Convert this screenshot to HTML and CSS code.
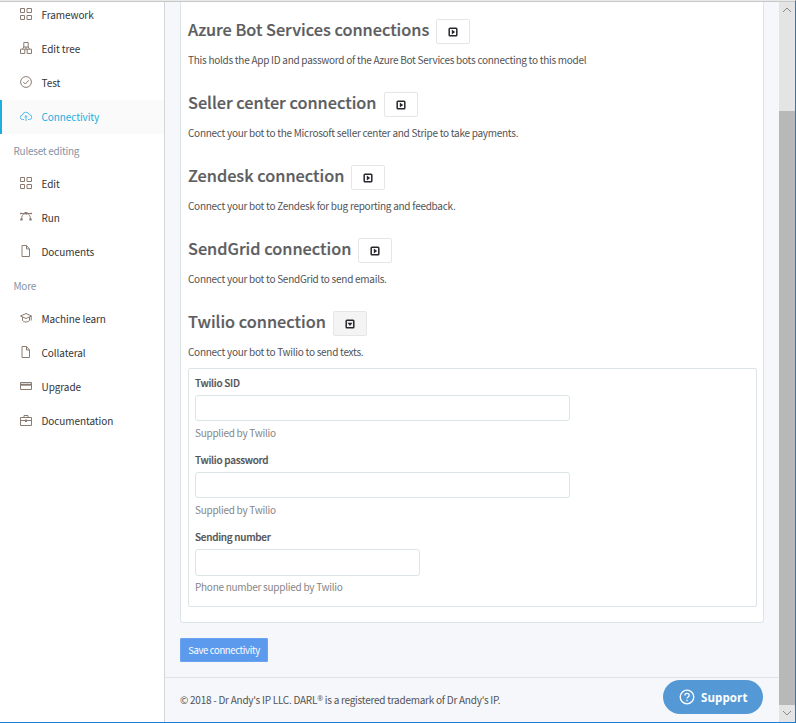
FILE: index.html
```html
<!DOCTYPE html>
<html lang="en">
<head>
<meta charset="utf-8">
<title>Connectivity</title>
<link rel="stylesheet" href="styles.css">
</head>
<body>
<svg class="defs" aria-hidden="true">
  <symbol id="grid" viewBox="0 0 12 12"><path d="M.5.5h4v4h-4zM7 .5h4.500v4H7zM.5 7.500h4v4h-4zM7 7.500h4.500v4H7z"/></symbol>
  <symbol id="tree" viewBox="0 0 12 12"><path d="M3.800.5h4.400v4.500H3.800zM.5 7.200h4.300v4.300H.5zM7.200 7.200h4.300v4.300H7.200zM6 5v2.200M2.600 7l1.200-2M9.400 7L8.200 5M4.800 7.200h2.400"/></symbol>
  <symbol id="check" viewBox="0 0 12 12"><circle cx="6" cy="6" r="5.400"/><path d="M3.300 6l2 2 3.600-3.800"/></symbol>
  <symbol id="cloud" viewBox="0 0 12 12"><path d="M4 9.500H2.700a2.200 2.200 0 0 1-.4-4.400A3.700 3.700 0 0 1 9.400 4.700a2.400 2.400 0 0 1 0 4.800H8M6 11V5.600M4.400 7.200L6 5.600l1.600 1.600"/></symbol>
  <symbol id="vector" viewBox="0 0 12 12"><path d="M0 2.500h12M1.500 8.500c0-3 1-5.200 3.200-6M10.500 8.500c0-3-1-5.200-3.200-6"/><path class="solid" d="M4.500 1h3v2.500h-3zM.3 7.500h2.400v2H.3zM9.300 7.500h2.400v2H9.300zM0 1.800h1.500v1.500H0zM10.500 1.800H12v1.500h-1.500z"/></symbol>
  <symbol id="file" viewBox="0 0 12 12"><path d="M2 .5h4.500L9.500 4v7.500H2zM6.500.5V4h3"/></symbol>
  <symbol id="cap" viewBox="0 0 12 12"><path d="M.5 4L6 1.500 11.500 4 6 6.500zM2.500 5v3.500c2 2 5 2 7 0V5M11.200 4v4.500"/></symbol>
  <symbol id="cardicon" viewBox="0 0 12 12"><path d="M.5 2.500h11v7H.5z"/><path class="solid" d="M.5 3.700h11v2H.5z"/></symbol>
  <symbol id="case" viewBox="0 0 12 12"><path d="M.5 3.500h11v8H.5zM4 3.500v-2h4v2M.5 6.500h11M6 5v3M5 7.500h2"/></symbol>
  <symbol id="right" viewBox="0 0 10 10"><rect x="1.200" y="1.200" width="7.600" height="7.600" rx=".8" stroke-width="1.500"/><path class="solid" d="M3.800 2.600L7.200 5 3.800 7.400z"/></symbol>
  <symbol id="down" viewBox="0 0 10 10"><rect x="1.200" y="1.200" width="7.600" height="7.600" rx=".8" stroke-width="1.500"/><path class="solid" d="M2.500 3.700h5L5 7.100z"/></symbol>
</svg>
<div class="window">
  <nav class="sidebar">
    <a class="item"><svg><use href="#grid"/></svg><span>Framework</span></a>
    <a class="item"><svg><use href="#tree"/></svg><span>Edit tree</span></a>
    <a class="item"><svg><use href="#check"/></svg><span>Test</span></a>
    <a class="item active"><svg><use href="#cloud"/></svg><span>Connectivity</span></a>
    <div class="group">Ruleset editing</div>
    <a class="item"><svg><use href="#grid"/></svg><span>Edit</span></a>
    <a class="item"><svg><use href="#vector"/></svg><span>Run</span></a>
    <a class="item"><svg><use href="#file"/></svg><span>Documents</span></a>
    <div class="group">More</div>
    <a class="item"><svg><use href="#cap"/></svg><span>Machine learn</span></a>
    <a class="item"><svg><use href="#file"/></svg><span>Collateral</span></a>
    <a class="item"><svg><use href="#cardicon"/></svg><span>Upgrade</span></a>
    <a class="item"><svg><use href="#case"/></svg><span>Documentation</span></a>
  </nav>
  <main class="main">
    <div class="panel">
      <section class="section">
        <div class="head"><h2>Azure Bot Services connections</h2><button class="toggle"><svg><use href="#right"/></svg></button></div>
        <p>This holds the App ID and password of the Azure Bot Services bots connecting to this model</p>
      </section>
      <section class="section">
        <div class="head"><h2>Seller center connection</h2><button class="toggle"><svg><use href="#right"/></svg></button></div>
        <p>Connect your bot to the Microsoft seller center and Stripe to take payments.</p>
      </section>
      <section class="section">
        <div class="head"><h2>Zendesk connection</h2><button class="toggle"><svg><use href="#right"/></svg></button></div>
        <p>Connect your bot to Zendesk for bug reporting and feedback.</p>
      </section>
      <section class="section">
        <div class="head"><h2>SendGrid connection</h2><button class="toggle"><svg><use href="#right"/></svg></button></div>
        <p>Connect your bot to SendGrid to send emails.</p>
      </section>
      <section class="section">
        <div class="head"><h2>Twilio connection</h2><button class="toggle open"><svg><use href="#down"/></svg></button></div>
        <p>Connect your bot to Twilio to send texts.</p>
      </section>
      <div class="fields">
        <div class="field"><label for="sid">Twilio SID</label><input id="sid"><small>Supplied by Twilio</small></div>
        <div class="field"><label for="pw">Twilio password</label><input id="pw"><small>Supplied by Twilio</small></div>
        <div class="field"><label for="num">Sending number</label><input id="num" class="short"><small>Phone number supplied by Twilio</small></div>
      </div>
    </div>
    <button class="save">Save connectivity</button>
    <footer class="footer"><span>© 2018 - Dr Andy's IP LLC. DARL<sup>®</sup> is a registered trademark of Dr Andy's IP.</span></footer>
  </main>
  <div class="scrollbar">
    <svg class="arrow" viewBox="0 0 16 16"><path d="M4 10l4-4 4 4"/></svg>
    <div class="thumb"></div>
    <svg class="arrow" viewBox="0 0 16 16"><path d="M4 6l4 4 4-4"/></svg>
  </div>
</div>
<button class="support"><svg viewBox="0 0 16 16"><circle cx="8" cy="8" r="6.800"/><path d="M5.900 6.500c0-2.900 4.300-2.700 4.300-.2C10.200 8 8 7.900 8 9.600M8 10.800v1.500"/></svg><span>Support</span></button>
</body>
</html>
```
FILE: styles.css
```css
* { box-sizing: border-box; }
body {
  margin: 0;
  height: 723px;
  overflow: hidden;
  font: 10px/16px "Noto Sans CJK SC", "Noto Sans", sans-serif;
  letter-spacing: -.27px;
  color: #525356;
  background: #f5f7fb;
}
.defs { position: absolute; width: 0; height: 0; }
svg { fill: none; stroke: currentColor; flex: none; }
.solid { fill: currentColor; stroke: none; }
button { font: inherit; letter-spacing: inherit; padding: 0; }
.window {
  display: flex;
  height: 723px;
  border-top: 1px solid #e8e8e8;
  border-right: 1px solid #1a7fd4;
  border-bottom: 1px solid #1a7fd4;
  box-shadow: inset 0 1px #c8c8c8;
  padding-top: 1px;
}
.sidebar {
  width: 165px;
  flex: none;
  margin-top: -4px;
  border-right: 1px solid #d3d6da;
  background: #fff;
  clip-path: inset(4px 0 0 0);
}
.item {
  display: flex;
  align-items: center;
  height: 34px;
  padding-left: 20px;
  gap: 9.500px;
  letter-spacing: -.08px;
  color: #333437;
}
.item svg { width: 12px; height: 12px; margin-top: -2px; color: #8a7c72; }
.item.active { background: #fafafa; color: #1caee0; padding-left: 18px; border-left: 2px solid #1caee0; }
.item.active svg { color: #57b9e6; }
.group { height: 33px; line-height: 33px; padding-left: 13.500px; color: #8593a5; }
.main { flex: 1; display: flex; flex-direction: column; align-items: flex-start; }
.panel {
  width: 584px;
  height: 621px;
  flex: none;
  margin-left: 15px;
  padding: 17px 6px 0 7px;
  border: 1px solid #dbe5e8;
  border-top: 0;
  border-radius: 0 0 3px 3px;
  background: #fff;
}
.section { height: 73px; }
.head { display: flex; align-items: center; height: 25px; gap: 7px; }
h2 { margin: -4px 0 0; font-size: 16.300px; line-height: 25px; letter-spacing: 0; font-weight: 500; color: #5c5d5f; -webkit-text-stroke: .2px; white-space: nowrap; }
.toggle { display: flex; align-items: center; justify-content: center; width: 34px; height: 25px; border: 1px solid #e6e6e6; border-radius: 2px; background: #fff; color: #27272e; }
.toggle.open { background: #f4f4f4; }
.toggle svg { width: 10px; height: 10px; }
p { margin: 8px 0 0; white-space: nowrap; }
.fields { width: 569px; height: 239px; margin-top: -16px; padding: 6px 6px; border: 1px solid #dbe5e8; border-radius: 2px; }
.field { display: flex; flex-direction: column; height: 77px; }
label { font-weight: 500; height: 20px; -webkit-text-stroke: .2px; }
input { width: 375px; height: 26px; border: 1px solid #dbe5e8; border-radius: 3px; background: #fff; }
.short { width: 225px; height: 27px; }
small { font-size: 10px; margin-top: 4px; color: #858688; }
.short + small { margin-top: 3px; }
.save { flex: none; width: 88px; height: 24px; margin: 15px 0 15px 15px; border: 1px solid #6ba3f0; border-radius: 1px; background: #5c9aee; color: #fff; font-size: 9.500px; letter-spacing: -.35px; white-space: nowrap; }
.footer { width: 100%; flex: 1; padding: 14px 15px; border-top: 1px solid #e0e4e9; letter-spacing: -.25px; white-space: nowrap; }
sup { font: 7px/0 "Open Sans", sans-serif; vertical-align: 3px; }
.scrollbar { width: 16px; display: flex; flex-direction: column; background: #e4e4e4; }
.arrow { width: 16px; height: 16px; stroke: #888; }
.thumb { height: 594px; margin-top: 93px; background: #b8b8b8; }
.support {
  position: absolute;
  left: 663px;
  top: 680px;
  width: 100px;
  height: 34px;
  display: flex;
  align-items: center;
  gap: 6px;
  padding-left: 16px;
  border: 0;
  border-radius: 17px;
  background: #5499d6;
  color: #fff;
  font: bold 11.500px "Open Sans", sans-serif;
  letter-spacing: .1px;
}
.support svg { width: 16px; height: 16px; stroke-width: 1.300; }
```
